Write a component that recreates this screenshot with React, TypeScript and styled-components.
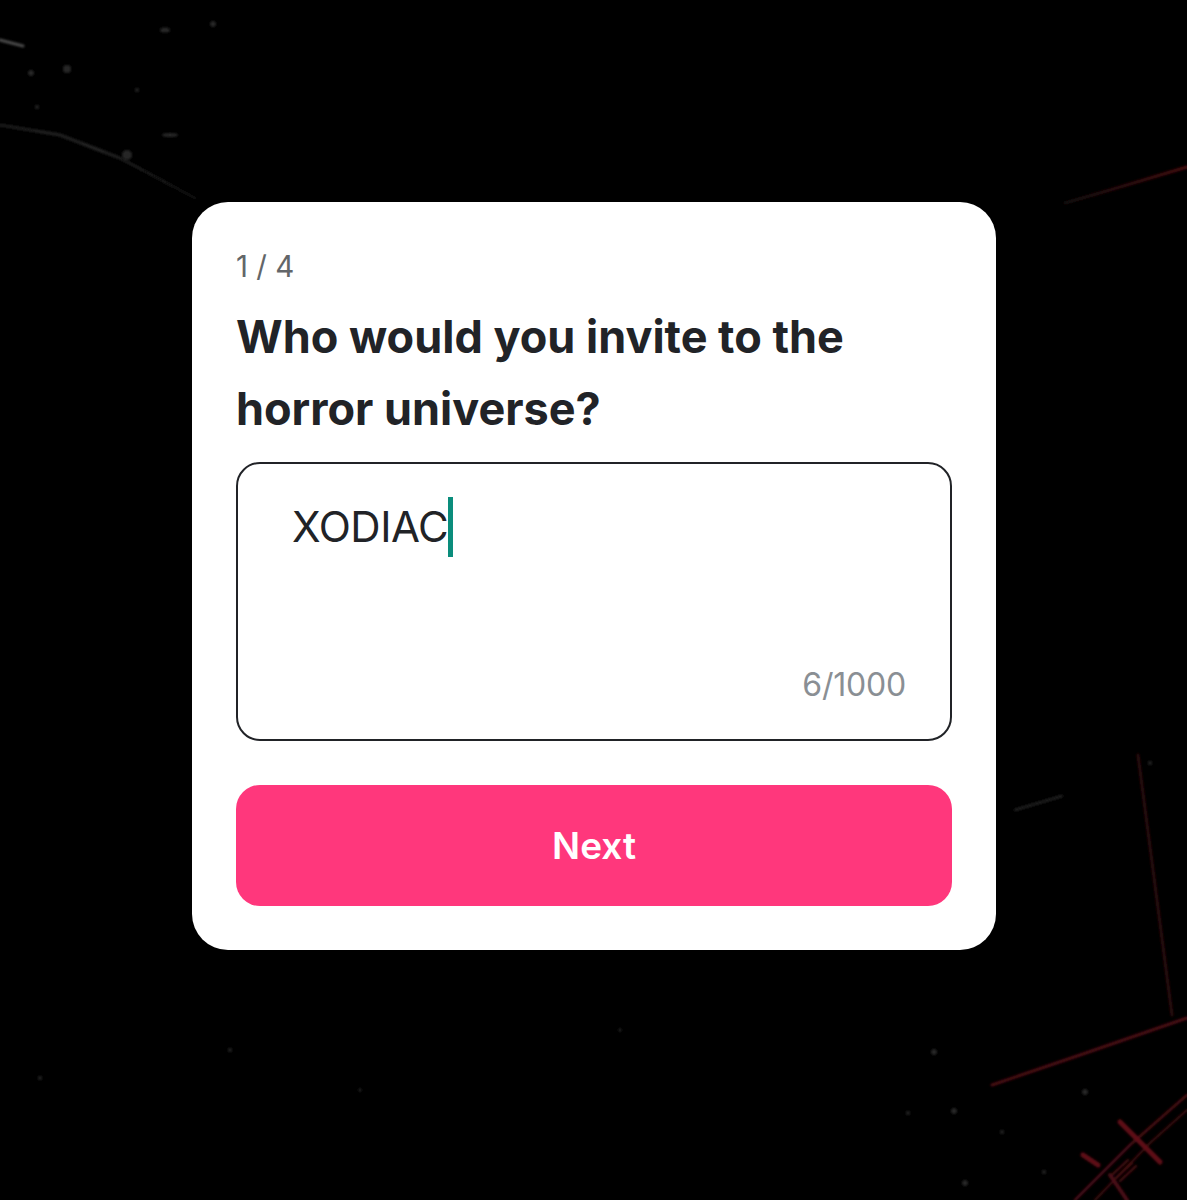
import styled, { createGlobalStyle } from "styled-components";

const GlobalStyle = createGlobalStyle`
  html, body {
    margin: 0;
    padding: 0;
    background: #000;
  }
`;

const Page = styled.div`
  position: relative;
  width: 1187px;
  height: 1200px;
  padding: 202px 0 0 1px;
  box-sizing: border-box;
  display: flex;
  flex-direction: column;
  align-items: center;
  overflow: hidden;
  background: #000;
  font-family: Inter, "Liberation Sans", sans-serif;
`;

const Backdrop = styled.svg`
  position: absolute;
  inset: 0;
  width: 100%;
  height: 100%;
`;

const Card = styled.main`
  position: relative;
  width: 804px;
  height: 748px;
  box-sizing: border-box;
  padding: 44px;
  display: flex;
  flex-direction: column;
  background: #fff;
  border-radius: 36px;
`;

const Step = styled.div`
  font-size: 29.5px;
  line-height: 40px;
  color: #636669;
`;

const Title = styled.h1`
  margin: 15px 0 17px;
  font-size: 45px;
  line-height: 72px;
  font-weight: 700;
  color: #212327;
`;

const Field = styled.div`
  height: 280px;
  box-sizing: border-box;
  padding: 32px 44px 34px 54px;
  display: flex;
  flex-direction: column;
  justify-content: space-between;
  border: 2px solid #212327;
  border-radius: 24px;
`;

const Answer = styled.div`
  display: flex;
  align-items: center;
  height: 60px;
  font-size: 42px;
  letter-spacing: -0.5px;
  color: #212327;
`;

const Caret = styled.span`
  width: 5px;
  height: 60px;
  margin-top: 2px;
  background: #0a8d7c;
`;

const Counter = styled.div`
  align-self: flex-end;
  font-size: 32px;
  line-height: 40px;
  letter-spacing: -0.2px;
  color: #8a8f94;
`;

const NextButton = styled.button`
  height: 121px;
  margin-top: 44px;
  border: 0;
  border-radius: 24px;
  background: #ff377c;
  color: #fff;
  font-family: inherit;
  font-size: 37px;
  font-weight: 600;
`;

const App = () => {
  return (
    <Page>
      <GlobalStyle />
      <Backdrop viewBox="0 0 1187 1200" fill="none">
        <defs>
          <filter id="soft">
            <feGaussianBlur stdDeviation="1.2" />
          </filter>
          <linearGradient id="fade" x1="0" y1="0" x2="1" y2="0">
            <stop offset="0" stopColor="#1c1c1c" />
            <stop offset="0.5" stopColor="#262626" />
            <stop offset="1" stopColor="#0c0c0c" />
          </linearGradient>
          <linearGradient id="redFade" x1="0" y1="0" x2="1" y2="0">
            <stop offset="0" stopColor="#141010" />
            <stop offset="0.4" stopColor="#2a070c" />
            <stop offset="1" stopColor="#4a0a12" />
          </linearGradient>
        </defs>
        <g filter="url(#soft)" strokeLinecap="round">
          <path d="M0 40L23 46" stroke="#4a4a4a" strokeWidth="3" />
          <path d="M0 125L60 135L120 158L195 198" stroke="url(#fade)" strokeWidth="3" />
          <path d="M1065 203L1110 190L1187 167" stroke="url(#redFade)" strokeWidth="3" />
          <path d="M1015 810L1062 796" stroke="#1c1c1c" strokeWidth="3" />
          <path d="M1138 755L1172 1015" stroke="#2a090d" strokeWidth="3" />
          <path d="M992 1085L1080 1055L1187 1018" stroke="#4c0b14" strokeWidth="3" />
          <path d="M1075 1200L1130 1145L1187 1095" stroke="#4c0b14" strokeWidth="2.5" />
          <path d="M1095 1200L1150 1143L1187 1110" stroke="#400a10" strokeWidth="2" />
          <path d="M1120 1122L1160 1162" stroke="#600d18" strokeWidth="5" />
          <path d="M1083 1155L1098 1165" stroke="#600d18" strokeWidth="5" />
          <path d="M1110 1175L1127 1200" stroke="#4c0b14" strokeWidth="4" />
          <path d="M1112 1175L1128 1160M1116 1178L1132 1163M1120 1181L1136 1166" stroke="#500c15" strokeWidth="2" />
        </g>
        <g fill="#262626" filter="url(#soft)">
          <ellipse cx="165" cy="30" rx="5" ry="2.5" />
          <circle cx="213" cy="24" r="3" />
          <circle cx="67" cy="69" r="4" />
          <circle cx="137" cy="90" r="2" />
          <circle cx="127" cy="155" r="5" />
          <circle cx="31" cy="73" r="3" />
          <circle cx="37" cy="107" r="2" />
          <ellipse cx="170" cy="135" rx="8" ry="2" />
          <circle cx="934" cy="1052" r="3" />
          <circle cx="954" cy="1111" r="3" />
          <circle cx="1085" cy="1092" r="3" />
          <circle cx="1002" cy="1132" r="2" />
          <circle cx="1044" cy="1172" r="2" />
          <circle cx="965" cy="1183" r="3" />
          <circle cx="1150" cy="763" r="2" />
          <circle cx="908" cy="1113" r="2" />
          <circle cx="230" cy="1050" r="2" />
          <circle cx="40" cy="1078" r="2" />
          <circle cx="620" cy="1030" r="1.5" />
          <circle cx="360" cy="1090" r="1.5" />
        </g>
      </Backdrop>
      <Card>
        <Step>1 / 4</Step>
        <Title>
          Who would you invite to the
          <br />
          horror universe?
        </Title>
        <Field>
          <Answer>
            XODIAC
            <Caret />
          </Answer>
          <Counter>6/1000</Counter>
        </Field>
        <NextButton>Next</NextButton>
      </Card>
    </Page>
  );
};

export default App;
